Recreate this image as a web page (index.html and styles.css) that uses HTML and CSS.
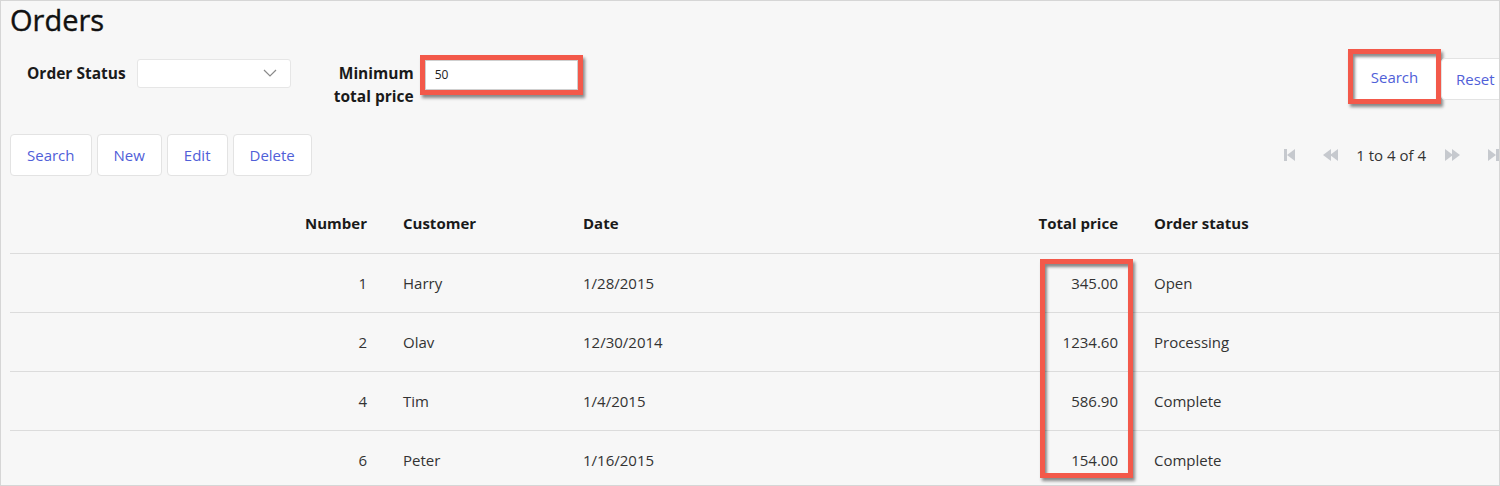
FILE: index.html
```html
<!DOCTYPE html>
<html lang="en">
<head>
<meta charset="utf-8">
<title>Orders</title>
<link rel="stylesheet" href="styles.css">
</head>
<body>
<div class="frame">
  <div class="page">
    <h1 class="title">Orders</h1>

    <div class="filters">
      <label class="lbl lbl-status">Order Status</label>
      <div class="select">
        <svg class="chev" width="14" height="8" viewBox="0 0 14 8"><polyline points="1,1 7,7 13,1" fill="none" stroke="#8a8a8a" stroke-width="1.2"/></svg>
      </div>
      <label class="lbl lbl-min">Minimum<br>total price</label>
      <div class="hl hl-input"><div class="input">50</div></div>
      <div class="filters-right">
        <button class="hl hl-search">Search</button>
        <button class="btn btn-reset">Reset</button>
      </div>
    </div>

    <div class="toolbar">
      <button class="btn">Search</button>
      <button class="btn">New</button>
      <button class="btn">Edit</button>
      <button class="btn">Delete</button>
      <div class="pager">
        <svg class="pg pg-first" width="11" height="12" viewBox="0 0 11 12"><rect x="0" y="0" width="3" height="12" fill="#c6c9ce"/><polygon points="11,0 11,12 3,6" fill="#c6c9ce"/></svg>
        <svg class="pg pg-prev" width="15" height="12" viewBox="0 0 15 12"><polygon points="8,0 8,12 0,6" fill="#c6c9ce"/><polygon points="15,0 15,12 7,6" fill="#c6c9ce"/></svg>
        <span class="pg-text">1 to 4 of 4</span>
        <svg class="pg pg-next" width="15" height="12" viewBox="0 0 15 12"><polygon points="0,0 0,12 8,6" fill="#c6c9ce"/><polygon points="7,0 7,12 15,6" fill="#c6c9ce"/></svg>
        <svg class="pg pg-last" width="11" height="12" viewBox="0 0 11 12"><polygon points="0,0 0,12 8,6" fill="#c6c9ce"/><rect x="8" y="0" width="3" height="12" fill="#c6c9ce"/></svg>
      </div>
    </div>

    <div class="grid-wrap">
      <table class="grid">
        <colgroup>
          <col class="c-num"><col class="c-cust"><col class="c-date"><col class="c-price"><col class="c-status">
        </colgroup>
        <thead>
          <tr><th class="r">Number</th><th>Customer</th><th>Date</th><th class="r">Total price</th><th>Order status</th></tr>
        </thead>
        <tbody>
          <tr><td class="r">1</td><td>Harry</td><td>1/28/2015</td><td class="r">345.00</td><td>Open</td></tr>
          <tr><td class="r">2</td><td>Olav</td><td>12/30/2014</td><td class="r">1234.60</td><td>Processing</td></tr>
          <tr><td class="r">4</td><td>Tim</td><td>1/4/2015</td><td class="r">586.90</td><td>Complete</td></tr>
          <tr><td class="r">6</td><td>Peter</td><td>1/16/2015</td><td class="r">154.00</td><td>Complete</td></tr>
        </tbody>
      </table>
      <div class="hl hl-col"></div>
    </div>
  </div>
</div>
</body>
</html>
```

FILE: styles.css
```css
* { box-sizing: border-box; }
html, body { margin: 0; padding: 0; background: #f7f7f7; }
body { font-family: "Open Sans", "Noto Sans", sans-serif; color: #333; }

.frame {
  width: 1500px;
  height: 486px;
  border: 1px solid #d6d6d6;
  background: #f7f7f7;
  overflow: hidden;
}
.page {
  width: 1512px;
  padding-left: 9px;
}

.title {
  margin: 0;
  font-size: 29px;
  line-height: 37px;
  font-weight: 400;
  color: #111;
  -webkit-text-stroke: 0.4px #111;
}

.filters {
  display: flex;
  align-items: flex-start;
  margin-top: 11px;
  height: 60px;
}
.lbl {
  font-size: 15.5px;
  font-weight: 700;
  color: #1a1a1a;
  line-height: 23px;
}
.lbl-status { margin-left: 17px; padding-top: 13px; }
.select {
  width: 154px;
  height: 29px;
  margin-left: 11px;
  margin-top: 10px;
  background: #fff;
  border: 1px solid #e6e6e6;
  border-radius: 3px;
  display: flex;
  align-items: center;
  justify-content: flex-end;
  padding-right: 13px;
}
.chev { display: block; margin-top: -2px; }
.lbl-min {
  margin-left: 43px;
  width: 80px;
  text-align: right;
  padding-top: 13px;
}

.hl {
  border: 5px solid #f3594a;
  box-shadow: 2px 3px 3px rgba(0,0,0,0.45), inset 2px 3px 3px rgba(0,0,0,0.45);
}
.hl-input {
  margin-left: 6px;
  margin-top: 6px;
  width: 163px;
  height: 40px;
  background: #fff;
}
.input {
  height: 100%;
  border: 1px solid #cfcfcf;
  background: #fff;
  font-size: 12px;
  line-height: 28px;
  padding-left: 9px;
  color: #222;
}
.filters-right {
  margin-left: auto;
  display: flex;
  align-items: flex-start;
}
.hl-search {
  width: 93px;
  height: 55px;
  background: #fff;
  font-family: inherit;
  font-size: 15px;
  color: #5060d8;
  padding: 0;
  cursor: pointer;
}
.btn {
  height: 42px;
  padding: 0 16px;
  background: #fff;
  border: 1px solid #e3e3e3;
  border-radius: 4px;
  font-family: inherit;
  font-size: 15px;
  color: #5060d8;
  cursor: pointer;
}
.btn-reset {
  margin-left: 0;
  margin-top: 9px;
  width: 72px;
  padding-left: 14px;
  text-align: left;
  border-radius: 4px 0 0 4px;
}

.toolbar {
  display: flex;
  align-items: center;
  gap: 5px;
  margin-top: 25px;
  height: 42px;
}
.pager {
  margin-left: auto;
  margin-right: 14px;
  display: flex;
  align-items: center;
}
.pg { display: block; }
.pg-prev { margin-left: 28px; }
.pg-text { margin-left: 18px; font-size: 15px; color: #333; }
.pg-next { margin-left: 19px; }
.pg-last { margin-left: 28px; }

.grid-wrap {
  position: relative;
  margin-top: 18px;
}
.grid {
  width: 100%;
  border-collapse: collapse;
  table-layout: fixed;
  font-size: 15px;
}
.c-num { width: 375px; }
.c-cust { width: 180px; }
.c-date { width: 435px; }
.c-price { width: 136px; }
.grid th, .grid td {
  height: 59px;
  padding: 0 18px;
  text-align: left;
  border-bottom: 1px solid #dcdcdc;
  white-space: nowrap;
}
.grid th {
  font-weight: 700;
  color: #1a1a1a;
}
.grid td { color: #333; }
.grid .r { text-align: right; }

.hl-col {
  position: absolute;
  left: 1030px;
  top: 65px;
  width: 93px;
  height: 219px;
}
```
